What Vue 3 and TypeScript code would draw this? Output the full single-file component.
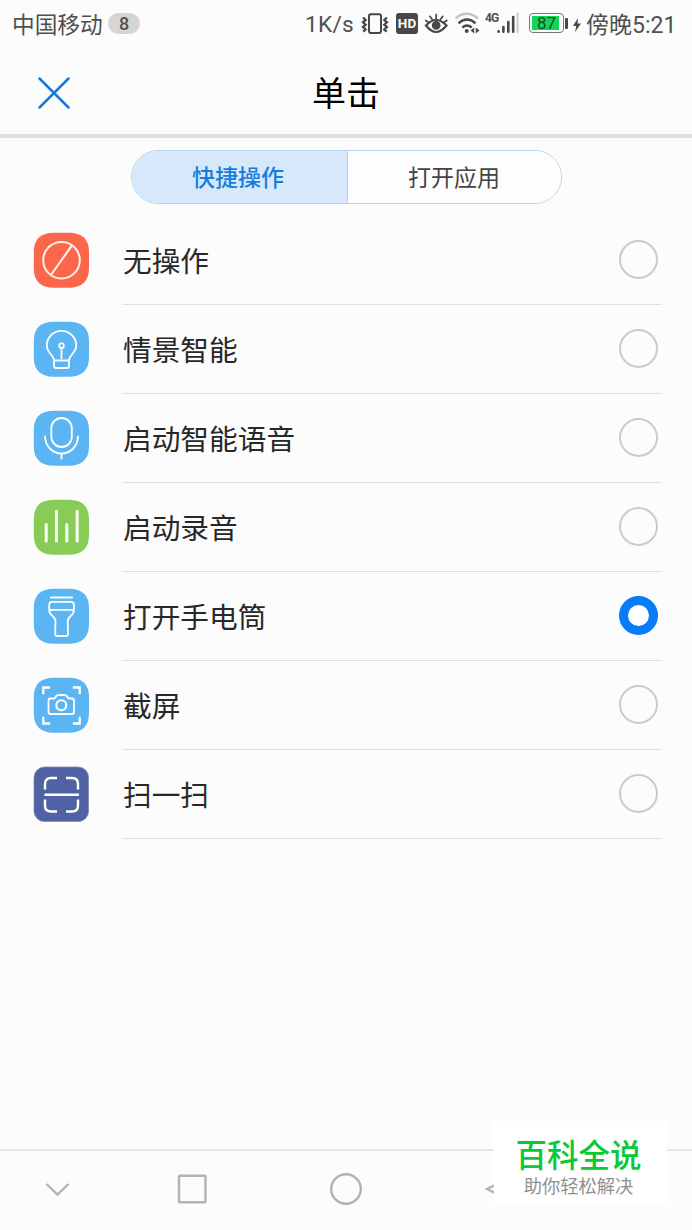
<script setup lang="ts">
import { ref } from 'vue'

type IconName = 'none' | 'bulb' | 'mic' | 'bars' | 'torch' | 'camera' | 'scan'

interface Action {
  label: string
  icon: IconName
}

const tabs: string[] = ['快捷操作', '打开应用']
const activeTab = ref<number>(0)
const selected = ref<IconName>('torch')

const actions: Action[] = [
  { label: '无操作', icon: 'none' },
  { label: '情景智能', icon: 'bulb' },
  { label: '启动智能语音', icon: 'mic' },
  { label: '启动录音', icon: 'bars' },
  { label: '打开手电筒', icon: 'torch' },
  { label: '截屏', icon: 'camera' },
  { label: '扫一扫', icon: 'scan' },
]
</script>

<template>
  <div class="screen">
    <div class="status">
      <span class="carrier">中国移动</span>
      <span class="badge">8</span>
      <span class="speed">1K/s</span>
      <svg class="vibrate" width="30" height="24" viewBox="360 12 30 24" fill="none" stroke="#484848">
        <rect x="369" y="14.300" width="12" height="18.600" rx="1.800" stroke-width="2" />
        <path d="M363 17.500l2.600 2.400-2.600 2.400 2.600 2.400-2.600 2.400 2.600 2.400-2.400 2.200M386.900 17.500l-2.600 2.400 2.600 2.400-2.600 2.400 2.600 2.400-2.600 2.400 2.400 2.200" stroke-width="2.300" />
      </svg>
      <span class="hd">HD</span>
      <svg class="eye" width="26" height="24" viewBox="423 12 26 24" fill="none" stroke="#484848" stroke-width="2.200" stroke-linecap="round">
        <path d="M426 25.500Q436 14.500 446.500 25.500Q436 38.500 426 25.500Z" />
        <path d="M425.700 20.500l3.200 2M429.800 16.300l2.300 3M436.200 14.500v4M442.800 16.300l-2.300 3M446.800 20.500l-3.200 2" stroke-width="1.700" />
        <circle cx="436.200" cy="25.300" r="3.300" fill="#484848" />
      </svg>
      <svg class="wifi" width="28" height="24" viewBox="454 12 28 24" fill="none" stroke="#484848" stroke-width="2.300">
        <path d="M455.500 18.500Q466.500 9 478 18.500" stroke="#c4c4c4" />
        <path d="M458.500 23.300Q467 15.800 475.500 23.300M462.300 27.500Q467 23.500 471.700 27.500" />
        <circle cx="466.700" cy="31" r="2" fill="#484848" stroke="none" />
        <path d="M474.200 27.500v6l-3.700-3zM475.800 27.500v6l3.700-3z" fill="#484848" stroke="none" />
      </svg>
      <span class="network">4G</span>
      <svg class="signal" width="22" height="24" viewBox="497 12 22 24" fill="none" stroke="#484848" stroke-width="2.600" stroke-linecap="round">
        <path d="M498.600 31.200v.6M503.400 27v4.800M508.300 22v9.800M513.200 17v14.800" />
        <path d="M517.600 13.500v18.800" stroke="#cbcbcb" stroke-width="2" />
      </svg>
      <span class="battery"><span class="charge">87</span></span>
      <span class="terminal"></span>
      <svg class="bolt" width="10" height="16" viewBox="0 0 10 16"><path d="M6 1L1 9h3.300L3 15l6-8.500H5.500z" fill="#484848" /></svg>
      <span class="time">傍晚5:21</span>
    </div>

    <header class="header">
      <svg class="close" width="34" height="34" viewBox="0 0 34 34" fill="none" stroke="#177bdc" stroke-width="2.500" stroke-linecap="round">
        <path d="M2.500 2.500l29 29M31.500 2.500l-29 29" />
      </svg>
      <h1>单击</h1>
    </header>

    <div class="tabs">
      <button v-for="(tab, i) in tabs" :key="tab" class="tab" :class="{ active: activeTab === i }" @click="activeTab = i">{{ tab }}</button>
    </div>

    <ul class="list">
      <li v-for="item in actions" :key="item.icon" class="row" @click="selected = item.icon">
        <svg class="tile" :class="item.icon" width="56" height="56" viewBox="0 0 56 56" fill="none" stroke="#fff" stroke-width="1.800" stroke-linecap="round" stroke-linejoin="round">
          <path v-if="item.icon !== 'scan'" class="plate" d="M21 .7H35.500Q56 .7 56 20V36Q56 55.700 35.500 55.700H21Q.8 55.700 .8 36V20Q.8 .7 21 .7Z" stroke="none" />
          <rect v-else class="plate" x="1" y="1" width="54.600" height="54.600" rx="10.500" stroke="#7d89b8" stroke-width=".8" />
          <g v-if="item.icon === 'none'" stroke="#fff2e6" stroke-width="2">
            <circle cx="28.500" cy="28.200" r="18.300" /><path d="M38.800 13.700L18.200 42.700" />
          </g>
          <g v-else-if="item.icon === 'bulb'">
            <path d="M21 39.500C21 34 13.800 32 13.800 24.500a14.700 14.700 0 0 1 29.400 0C43.200 32 36 34 36 39.500ZM21 39.500v5.500q0 2 2 2h11q2 0 2-2v-5.500M28.500 27.200v10" />
            <circle cx="28.500" cy="24.700" r="2.300" />
          </g>
          <g v-else-if="item.icon === 'mic'">
            <rect x="18.300" y="8" width="20.500" height="29" rx="10.250" /><path d="M12 26.500C12.500 36.500 19.500 43.500 28.500 43.500S44.500 36.500 45 26.500M28.500 43.500v5" />
          </g>
          <g v-else-if="item.icon === 'bars'" stroke-width="3" stroke="#f8ffec">
            <path d="M13.200 25.500v16.500M23.500 12.300v29.700M33.800 25.500v16.500M44.200 12.300v29.700" />
          </g>
          <g v-else-if="item.icon === 'torch'">
            <path d="M18 9.500h21" stroke-width="2.200" />
            <path d="M16.200 21.800v-5q0-3 3-3h18.700q3 0 3 3v5ZM16.200 21.800C16.500 29.500 22.800 26.500 22.500 34L22.200 46q0 2 2 2h8.800q2 0 2-2L34.700 34C34.500 26.500 40.700 29.500 40.900 21.800" />
          </g>
          <g v-else-if="item.icon === 'camera'">
            <path d="M10.300 16v-5.500H16M41 10.500h5.700V16M10.300 41v5.500H16M41 46.500h5.700V41" stroke-width="2.300" stroke-linecap="square" stroke-linejoin="miter" />
            <path d="M17.500 21.500h4q2-3.500 4-3.500h6q2 0 4 3.500H39q2 0 2 2v11.500q0 2-2 2H17.500q-2 0-2-2V23.500q0-2 2-2Z" />
            <circle cx="28.300" cy="28.300" r="5" stroke-width="2.100" />
          </g>
          <g v-else stroke-width="2.400" stroke-linecap="butt">
            <path d="M12 23.500V18q0-6 6-6H24M33 12h6q6 0 6 6v5.500M12 33.500v6q0 6 6 6H24M33 45.500h6q6 0 6-6v-6M11.500 28.700h34.500" />
          </g>
        </svg>
        <div class="cell">
          <span class="label">{{ item.label }}</span>
          <span class="radio" :class="{ checked: selected === item.icon }"></span>
        </div>
      </li>
    </ul>

    <nav class="nav">
      <svg width="26" height="26" viewBox="0 0 26 26"><path d="M2.500 8l11 10.500L24.500 8" /></svg>
      <svg width="30" height="30" viewBox="0 0 30 30"><rect x="2" y="1.800" width="26.500" height="26.500" rx="1" /></svg>
      <svg width="34" height="34" viewBox="0 0 34 34"><circle cx="17" cy="17" r="14.800" /></svg>
      <svg width="30" height="34" viewBox="0 0 30 34"><path d="M28 4L2 17l26 13Z" /></svg>
    </nav>

    <div class="watermark">
      <strong>百科全说</strong>
      <span>助你轻松解决</span>
    </div>
  </div>
</template>

<style>
body {
  background: #fcfcfc;
}
</style>

<style scoped>
* {
  box-sizing: border-box;
}
.screen {
  position: relative;
  display: flex;
  flex-direction: column;
  width: 692px;
  height: 1230px;
  overflow: hidden;
  background: #fcfcfc;
  color: #282828;
  font-family: Roboto, "Noto Sans CJK SC", sans-serif;
}
.status {
  display: flex;
  align-items: center;
  height: 48px;
  padding-left: 12px;
  color: #505050;
  white-space: nowrap;
}
.status > * {
  flex: none;
}
.carrier {
  width: 96px;
  padding-bottom: 2px;
  font-size: 22.7px;
}
.badge {
  width: 32px;
  height: 21px;
  margin: 0 165px 1px 0;
  border-radius: 11px;
  background: #d5d5d5;
  font-size: 18px;
  font-weight: 500;
  line-height: 22px;
  text-align: center;
}
.speed {
  width: 55px;
  font-size: 22.7px;
  letter-spacing: 0.2px;
}
.hd {
  width: 22px;
  height: 21px;
  margin: 0 5px 1px 6px;
  border-radius: 3px;
  background: #484848;
  color: #fff;
  font-size: 13.5px;
  font-weight: 700;
  line-height: 21px;
  text-align: center;
}
.wifi {
  margin-left: 5px;
}
.network {
  align-self: flex-start;
  width: 12px;
  margin: 11px 0 0 3px;
  font-size: 12px;
  font-weight: 700;
  line-height: 14px;
  letter-spacing: -0.8px;
}
.battery {
  width: 35px;
  height: 20px;
  margin: 0 0 2px 10px;
  padding: 2px;
  border: 1px solid #777;
  border-radius: 4px;
}
.charge {
  display: block;
  width: 27px;
  height: 14px;
  padding-left: 5px;
  background: #12d65b;
  color: #164b29;
  font-size: 17px;
  line-height: 15px;
}
.terminal {
  width: 3px;
  height: 11px;
  margin: 0 0 2px 1px;
  border-radius: 1px;
  background: #484848;
}
.bolt {
  margin: 1px 4px 0;
}
.time {
  padding-bottom: 3px;
  font-size: 23px;
}
.header {
  display: grid;
  grid-template-columns: 92px 1fr 92px;
  align-items: center;
  height: 90px;
  border-bottom: 4px solid #e1e1e1;
}
.close {
  margin: 3px 0 0 37px;
}
h1 {
  margin: 6px 0 0;
  color: #000;
  font-size: 34px;
  font-weight: 400;
  line-height: 50px;
  text-align: center;
}
.tabs {
  display: flex;
  width: 431px;
  height: 54px;
  margin: 12px 0 0 130.5px;
  border: 1.5px solid #b5d4f1;
  border-radius: 27px;
  overflow: hidden;
}
.tab {
  flex: 1;
  padding: 0 0 2px;
  border: 0;
  background: #fdfdfd;
  color: #444;
  font: 400 23px "Noto Sans CJK SC", sans-serif;
}
.tab.active {
  padding-right: 2px;
  border-right: 1.5px solid #b5d4f1;
  background: #d7e8fb;
  color: #167fdd;
  font-weight: 500;
}
.list {
  margin: 12px 0 0;
  padding: 0;
  list-style: none;
}
.row {
  display: flex;
  height: 89px;
  padding: 0 31px 0 33px;
}
.tile {
  flex: none;
  margin: 16px 34px 0 0;
}
.plate {
  fill: #5ab5f2;
}
.none .plate {
  fill: #fc674c;
}
.bars .plate {
  fill: #89cb57;
}
.scan .plate {
  fill: #4f62a3;
}
.cell {
  display: flex;
  flex: 1;
  align-items: center;
  justify-content: space-between;
  border-bottom: 1.5px solid #dedede;
}
.label {
  padding-top: 3px;
  font-size: 28.7px;
  line-height: 42px;
}
.radio {
  width: 39px;
  height: 39px;
  margin: 0 3px 1px 0;
  border: 2px solid #cbcbcb;
  border-radius: 50%;
}
.radio.checked {
  border: 9.5px solid #087cf7;
  background: #fff;
}
.nav {
  display: flex;
  align-items: center;
  height: 81px;
  margin-top: auto;
  padding: 0 0 3px 44px;
  border-top: 2px solid #e7e7e7;
}
.nav svg {
  flex: none;
  fill: none;
  stroke: #b2b2b2;
  stroke-width: 2.4;
}
.nav svg:nth-child(2) {
  margin-left: 107px;
}
.nav svg:nth-child(3) {
  margin-left: 122px;
}
.nav svg:nth-child(4) {
  margin-left: 122px;
}
.watermark {
  position: absolute;
  right: 25px;
  bottom: 25px;
  display: flex;
  flex-direction: column;
  align-items: center;
  width: 173px;
  height: 84px;
  padding: 18px 4px 0 0;
  background: #fff;
}
.watermark strong {
  color: #0bc837;
  font-size: 31.5px;
  font-weight: 500;
  line-height: 36px;
}
.watermark span {
  color: #8f8f8f;
  font-size: 18.3px;
  line-height: 24px;
}
</style>
